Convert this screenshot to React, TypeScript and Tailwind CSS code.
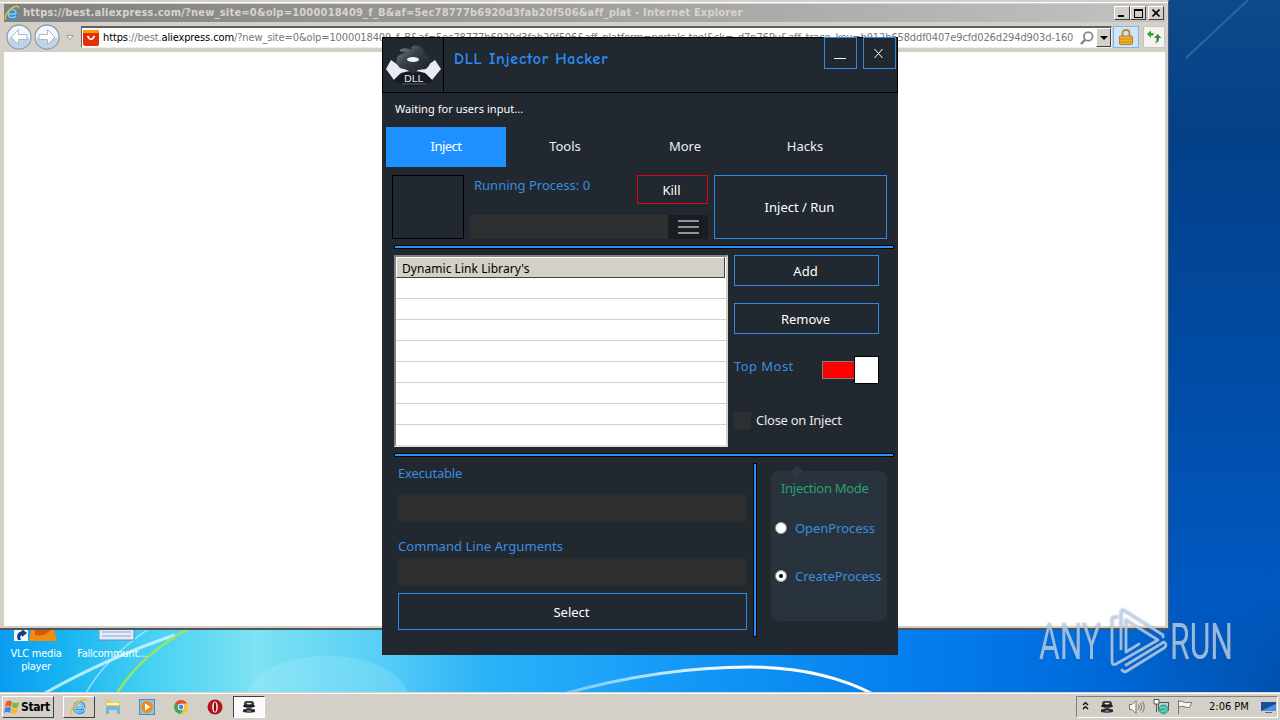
import React from 'react';

const tabs = ['Inject', 'Tools', 'More', 'Hacks'];

function IeLogo({ className }: { className: string }) {
  return (
    <svg viewBox="0 0 20 20" className={className} fill="none">
      <path d="M15.5 11.5H6M15.4 11.3C15.8 7.5 13.5 5 10.4 5C7.2 5 5 7.5 5 10.7C5 14 7.3 16.2 10.5 16.2C12.8 16.2 14.4 15.2 15.2 13.6" stroke="#2f92de" strokeWidth="3.6" />
      <path d="M15 11.3H6.5M15 11C15.3 7.8 13.3 5.4 10.4 5.4C7.4 5.4 5.3 7.7 5.3 10.7C5.3 13.8 7.4 15.8 10.5 15.8C12.6 15.8 14.2 14.9 15 13.5" stroke="#7fd0fa" strokeWidth="1.8" />
      <path d="M2.5 18C-0.5 15 4 8 9.5 4C14 0.8 18.5 0.5 18 4" stroke="#f0c020" strokeWidth="1.8" />
    </svg>
  );
}

function DllLogo() {
  return (
    <svg viewBox="0 0 60 54" className="h-[54px] w-[60px]">
      <defs>
        <linearGradient id="hat" x1="0" y1="0" x2="1" y2="1">
          <stop offset="0" stopColor="#84919c" />
          <stop offset="0.4" stopColor="#3a4149" />
          <stop offset="1" stopColor="#181c21" />
        </linearGradient>
      </defs>
      <path d="M8 22Q30 40 52 22L58 31L49 42L43 36Q30 40 17 36L11 42L3 31Z" fill="#e8ebf2" />
      <path d="M18 35Q30 31 42 35L50 43Q30 54 10 43Z" fill="#171c21" />
      <path d="M23 14Q14 14 18 11Q23 9 29 12Q26 8 33 7.5Q40 8 41 14L46 18Q50 25 43 31L35 32L30 36L24 32L17 30Q11 25 15 18Z" fill="url(#hat)" />
      <ellipse cx="30" cy="21.5" rx="6" ry="2.5" fill="#f0f2f5" />
      <path d="M19 46H43" stroke="#5a626b" />
      <text x="21" y="43.5" fontFamily="DejaVu Sans" fontSize="8" textLength="19" lengthAdjust="spacingAndGlyphs" fill="#dfe4ea">DLL</text>
    </svg>
  );
}

function AgentIcon() {
  return (
    <svg viewBox="0 0 14 14" className="h-3.5 w-3.5">
      <rect x="2" y="1" width="10" height="6" rx="2.5" fill="#3a3e42" />
      <ellipse cx="7" cy="6" rx="6" ry="1.8" fill="#1c1e20" />
      <ellipse cx="7" cy="3.6" rx="2.5" ry="0.9" fill="#e4e6e8" />
      <path d="M4 7H10L9 9.5H5Z" fill="#5a5e62" />
      <path d="M1 9.5Q7 8 13 9.5V12Q7 13.5 1 12Z" fill="#2a2c2e" />
      <path d="M5 11H9" stroke="#a8acb0" />
    </svg>
  );
}

function Orb({ flip }: { flip?: boolean }) {
  return (
    <svg viewBox="0 0 26 26" className={flip ? 'h-[26px] w-[26px] -scale-x-100' : 'h-[26px] w-[26px]'}>
      <circle cx="13" cy="13" r="12" fill="#f2f7fb" stroke="#8b9cad" strokeWidth="1.3" />
      <path d="M2.5 14A10.5 10.5 0 0 0 23.5 14Q13 10 2.5 14Z" fill="#bfd3e6" />
      <path d="M5 13L12.5 5.5V10.5H21V15.5H12.5V20.5Z" fill="#fff" stroke="#a9bac9" />
    </svg>
  );
}

function Separator() {
  return <div className="h-1 w-[500px] border border-[#02060d] bg-[#2b8ff5]" />;
}

function OutlineButton({ label, className }: { label: string; className: string }) {
  return (
    <button className={`flex items-center justify-center border border-[#3389e2] pt-0.5 pr-0.5 text-white ${className}`}>
      {label}
    </button>
  );
}

function Wallpaper() {
  return (
    <svg viewBox="0 0 1280 720" className="absolute inset-0 h-[720px] w-[1280px]">
      <defs>
        <linearGradient id="floor">
          <stop offset="0" stopColor="#0b9cf0" />
          <stop offset="0.05" stopColor="#18b4f2" />
          <stop offset="0.12" stopColor="#48d2f3" />
          <stop offset="0.2" stopColor="#7ee2f2" />
          <stop offset="0.29" stopColor="#5ad0f6" />
          <stop offset="0.38" stopColor="#2cb2f8" />
          <stop offset="0.52" stopColor="#159bf7" />
          <stop offset="0.7" stopColor="#0580ef" />
          <stop offset="0.85" stopColor="#006bdb" />
          <stop offset="1" stopColor="#0050ad" />
        </linearGradient>
        <linearGradient id="side" x1="0" y1="0" x2="0" y2="1">
          <stop offset="0" stopColor="#0c4a8a" />
          <stop offset="0.2" stopColor="#034088" />
          <stop offset="0.5" stopColor="#014aa2" />
          <stop offset="0.85" stopColor="#0058c0" />
          <stop offset="1" stopColor="#0058c0" stopOpacity="0" />
        </linearGradient>
        <linearGradient id="arc">
          <stop offset="0" stopColor="#6cc8ff" />
          <stop offset="0.6" stopColor="#fff" />
          <stop offset="1" stopColor="#fff" />
        </linearGradient>
      </defs>
      <rect width="1280" height="720" fill="url(#floor)" />
      <rect x="1168" width="112" height="690" fill="url(#side)" />
      <path d="M1186 58L1248 0" stroke="#5a93c9" strokeOpacity="0.4" strokeWidth="2" />
      <ellipse cx="327" cy="700" rx="82" ry="44" fill="#c0f4ff" fillOpacity="0.2" />
      <path d="M45 693C90 668 130 650 175 635" stroke="#d8f6ff" strokeOpacity="0.8" strokeWidth="3" fill="none" />
      <path d="M86 693C100 668 125 645 150 628" stroke="#c8f2ff" strokeOpacity="0.7" strokeWidth="1.5" fill="none" />
      <path d="M117 693C135 665 158 645 190 628" stroke="#9be65a" strokeWidth="2.5" fill="none" />
      <path d="M563 694Q660 667 750 667Q820 667 873 694" stroke="url(#arc)" strokeWidth="3" fill="none" />
    </svg>
  );
}

function BrowserWindow() {
  const control = 'flex h-[14px] w-4 items-center justify-center border border-t-white border-l-white border-r-[#404040] border-b-[#404040] bg-[#d4d0c8]';
  return (
    <div className="absolute top-0 left-0 flex h-[630px] w-[1169px] flex-col border-t border-r border-b-2 border-t-[#d4d0c8] border-r-[#505860] border-b-[#50555a] bg-[#d4d0c8] pt-px pr-[3px] pb-0.5 pl-1 font-['DejaVu_Sans_Condensed','DejaVu_Sans',sans-serif]">
      <div className="-ml-1 -mr-[3px] h-px shrink-0 bg-white" />
      <div className="mt-px flex h-[18px] shrink-0 items-center bg-linear-to-r from-[#808080] to-[#c2c2c2] pr-px">
        <IeLogo className="mr-[3px] h-4 w-4" />
        <span className="pt-px text-[11px] font-bold tracking-[0.21px] whitespace-nowrap text-[#d8d4cc]">
          https://best.aliexpress.com/?new_site=0&amp;olp=1000018409_f_B&amp;af=5ec78777b6920d3fab20f506&amp;aff_plat - Internet Explorer
        </span>
        <div className="ml-auto flex">
          <div className={control}><div className="mt-1.5 mr-0.5 h-0.5 w-1.5 bg-black" /></div>
          <div className={control}><div className="h-[9px] w-[9px] border border-t-2 border-black" /></div>
          <div className={`ml-0.5 ${control}`}>
            <svg viewBox="0 0 8 8" className="h-2 w-2"><path d="M0.5 0.5L7.5 7.5M7.5 0.5L0.5 7.5" stroke="#000" strokeWidth="1.6" /></svg>
          </div>
        </div>
      </div>
      <div className="flex h-[30px] shrink-0 items-center">
        <div className="ml-0.5 flex gap-0.5"><Orb /><Orb flip /></div>
        <svg viewBox="0 0 8 5" className="ml-1.5 h-[5px] w-2"><path d="M0.5 0.5H7.5L4 4.5Z" fill="#eee" stroke="#a5a19a" /></svg>
        <div className="ml-[7px] flex h-[22px] w-[1031px] shrink-0 items-center border border-t-2 border-t-[#606060] border-l-[#606060] border-r-[#eee] border-b-[#eee] bg-white">
          <svg viewBox="0 0 16 16" className="ml-px h-4 w-4 shrink-0">
            <rect width="16" height="16" rx="2" fill="#e62e04" />
            <path d="M0 3Q0 0 3 0H13Q16 0 16 3Z" fill="#ff9a00" />
            <path d="M4.5 6Q8 12.5 11.5 6" stroke="#fff" strokeWidth="1.6" fill="none" />
          </svg>
          <div className="mt-0.5 ml-1 w-[975px] shrink-0 text-[11px] tracking-[-0.12px] whitespace-nowrap text-[#777]">
            <span className="text-black">https</span>://best.<span className="text-black">aliexpress.com</span>/?new_site=0&amp;olp=1000018409_f_B&amp;af=5ec78777b6920d3fab20f506&amp;aff_platform=portals-tool&amp;sk=_d7n76Pu&amp;aff_trace_key=b912b658ddf0407e9cfd026d294d903d-160
          </div>
          <svg viewBox="0 0 14 14" className="ml-0.5 h-3.5 w-3.5 shrink-0" fill="none" stroke="#858585" strokeWidth="1.8"><circle cx="8.3" cy="5.4" r="4.3" /><path d="M5 8.8L1 13" strokeWidth="2.4" /></svg>
          <div className="ml-auto flex h-[19px] w-[15px] items-center justify-center border border-t-white border-l-white border-r-[#404040] border-b-[#404040] bg-[#d4d0c8]">
            <svg viewBox="0 0 8 4" className="h-1 w-2"><path d="M0 0H8L4 4Z" /></svg>
          </div>
        </div>
        <div className="ml-px flex h-[22px] w-[26px] items-center justify-center border border-[#86b4e6] bg-[#cfe3fb]">
          <svg viewBox="0 0 14 16" className="h-4 w-3.5">
            <path d="M3.5 8V4.5Q3.5 1 7 1Q10.5 1 10.5 4.5V8" fill="none" stroke="#b58a2a" strokeWidth="1.8" />
            <rect x="0.5" y="7" width="13" height="8.5" rx="1" fill="#f0b030" stroke="#c07a10" />
            <path d="M1 10H13M1 13H13" stroke="#c98a1c" />
          </svg>
        </div>
        <div className="ml-1 flex h-[22px] w-[22px] items-center justify-center rounded-xs border border-[#c8c5be] bg-[#f4f3f0]">
          <svg viewBox="0 0 16 14" className="h-3.5 w-4" fill="#35a035">
            <path d="M1 4L5 0.5V3H7.5V5.5H5V8Z" />
            <path d="M15.5 8L11.5 4L8 8H10.5Q11 11 9 13.5Q13.5 12 13 8Z" fill="#3c8a3c" />
          </svg>
        </div>
      </div>
      <div className="flex-1 bg-white" />
    </div>
  );
}

function InjectorHeader() {
  return (
    <div className="flex h-14 border border-black">
      <div className="w-[61px] border-r border-black"><DllLogo /></div>
      <h1 className="mt-[9px] ml-2.5 font-['Comic_Sans_MS','Comic_Neue','Noto_Sans',sans-serif] text-[16px] leading-6 font-bold tracking-[0.7px] whitespace-nowrap text-[#2b8cf5]">DLL Injector Hacker</h1>
      <div className="-mt-px mr-px ml-auto flex gap-1.5">
        <button className="flex h-8 w-[33px] items-center justify-center border border-[#3389e2]">
          <span className="mt-[11px] mr-px h-px w-3 bg-white" />
        </button>
        <button className="flex h-8 w-[33px] items-center justify-center border border-[#3389e2] pr-0.5">
          <svg viewBox="0 0 9 9" className="h-[9px] w-[9px]"><path d="M0.5 0L8.5 9M8.5 0L0.5 9" stroke="#fff" /></svg>
        </button>
      </div>
    </div>
  );
}

function ProcessRow() {
  return (
    <div className="mt-2 ml-2.5 flex h-16">
      <div className="w-[72px] border border-black" />
      <div className="ml-1.5 flex w-[238px] flex-col justify-between">
        <div className="flex justify-between pl-1">
          <span className="leading-5 text-[#3b8ddf]">Running Process: 0</span>
          <button className="h-[29px] w-[71px] border border-red-600 pt-0.5 pr-0.5 text-white">Kill</button>
        </div>
        <div className="flex h-6">
          <div className="w-[198px] bg-[#2d2f31]" />
          <div className="flex w-10 flex-col items-center justify-center gap-1 bg-[#191d21]">
            <div className="h-0.5 w-[21px] bg-[#929292]" />
            <div className="h-0.5 w-[21px] bg-[#929292]" />
            <div className="h-0.5 w-[21px] bg-[#929292]" />
          </div>
        </div>
      </div>
      <OutlineButton label="Inject / Run" className="ml-1.5 w-[173px]" />
    </div>
  );
}

function LibraryRow() {
  return (
    <div className="mt-1.5 ml-3 flex h-[192px]">
      <div className="w-[334px] border-2 border-t-[#808080] border-l-[#808080] border-r-[#d4d0c8] border-b-[#e4e0dc] bg-white">
        <div className="h-[21px] w-[329px] border border-t-white border-l-white border-r-[#404040] border-b-[#404040] bg-[#d4d0c8] pt-px pl-[5px] text-[12px] leading-5 tracking-[0.05px] text-black">Dynamic Link Library's</div>
        {Array.from({ length: 8 }, (_, i) => (
          <div key={i} className="h-[21px] border-b border-[#d0d0d0] last:h-5 last:border-b-0" />
        ))}
      </div>
      <div className="ml-1.5 flex w-[145px] flex-col">
        <OutlineButton label="Add" className="h-[31px]" />
        <OutlineButton label="Remove" className="mt-[17px] h-[31px]" />
        <div className="mt-[22px] flex h-7 items-center">
          <span className="-mt-1.5 tracking-[0.45px] text-[#3b8ddf]">Top Most</span>
          <div className="ml-auto h-[18px] w-8 border border-r-0 border-[#7f7f7f] bg-[#fe0000]" />
          <div className="h-7 w-[25px] border border-black bg-white" />
        </div>
        <div className="mt-[27px] flex h-[18px] items-center gap-[5px]">
          <div className="h-[17px] w-[17px] bg-[#2d2f31]" />
          <span className="pt-0.5 tracking-[-0.27px] text-[#e8e8e8]">Close on Inject</span>
        </div>
      </div>
    </div>
  );
}

function ModeOption({ label, checked }: { label: string; checked?: boolean }) {
  return (
    <label className="flex h-5 items-center gap-2 text-[#3b8ddf]">
      <span className="flex h-3 w-3 items-center justify-center rounded-full border border-[#9a9a9a] bg-white">
        {checked && <span className="h-1 w-1 rounded-full bg-black" />}
      </span>
      <span className="pt-0.5 tracking-[-0.05px]">{label}</span>
    </label>
  );
}

function LaunchRow() {
  return (
    <div className="mt-1.5 ml-4 flex h-[174px]">
      <div className="flex w-[349px] flex-col text-[#3b8ddf]">
        <span className="h-5 leading-5 tracking-[-0.2px]">Executable</span>
        <div className="mt-[11px] mr-px h-7 bg-[#2d2f31]" />
        <span className="mt-[14px] h-5 leading-5 tracking-[0.05px]">Command Line Arguments</span>
        <div className="mt-0.5 mr-px h-7 bg-[#2d2f31]" />
        <OutlineButton label="Select" className="mt-[7px] h-[37px]" />
      </div>
      <div className="ml-1.5 w-1 border border-[#02060d] bg-[#2b8ff5]" />
      <div className="relative mt-2 ml-3.5 h-[150px] w-[116px] rounded-lg bg-[#28333e] pl-1">
        <div className="absolute -top-1 left-[22px] h-2 w-2 rotate-45 bg-[#303943]" />
        <div className="mt-[7px] ml-1.5 h-5 leading-5 tracking-[-0.3px] text-[#2ba36b]">Injection Mode</div>
        <div className="mt-5"><ModeOption label="OpenProcess" /></div>
        <div className="mt-7"><ModeOption label="CreateProcess" checked /></div>
      </div>
    </div>
  );
}

function InjectorWindow() {
  return (
    <div className="absolute top-[37px] left-[382px] flex h-[618px] w-[516px] flex-col bg-[#21282f] font-['Noto_Sans',sans-serif] text-[13px] whitespace-nowrap">
      <InjectorHeader />
      <div className="mt-[7px] ml-[13px] h-[18px] text-[11px] leading-[18px] tracking-[0.05px] text-white">Waiting for users input...</div>
      <div className="mt-[9px] ml-1 flex h-10">
        {tabs.map((tab) => (
          <div key={tab} className={tab === 'Inject' ? 'flex w-[120px] items-center justify-center bg-[#1e90ff] tracking-[-0.5px] text-white' : 'flex w-[120px] items-center justify-center pr-0.5 text-[#eef0f2]'}>
            {tab}
          </div>
        ))}
      </div>
      <ProcessRow />
      <div className="mt-1.5 ml-3"><Separator /></div>
      <LibraryRow />
      <div className="mt-1.5 ml-3"><Separator /></div>
      <LaunchRow />
    </div>
  );
}

function DesktopIcons() {
  return (
    <div className="absolute top-[629px] left-1 flex font-['DejaVu_Sans_Condensed','DejaVu_Sans',sans-serif] text-[11px] leading-[13px] tracking-[-0.25px] text-white">
      <div className="flex w-16 flex-col items-center text-center">
        <svg viewBox="0 0 46 12" className="mb-1.5 h-3 w-[46px]">
          <path d="M18 0H41L44 12H16Z" fill="#f28a10" />
          <path d="M22 0H38Q33 8 22 6Z" fill="#cf5a08" />
          <rect width="14" height="12" x="1" fill="#f4f6fa" />
          <path d="M5 11Q2 4 9 2V0L14 4L9 8V6Q6 7 8 11Z" fill="#123c82" />
        </svg>
        <span>VLC media<br />player</span>
      </div>
      <div className="ml-1 flex w-20 flex-col items-center">
        <svg viewBox="0 0 36 12" className="mb-1.5 ml-2.5 h-3 w-9">
          <rect width="35" height="11" fill="#e4ebf8" stroke="#6b86b8" />
          <path d="M3 3H32M3 7H32" stroke="#8fa5d0" />
        </svg>
        <span className="whitespace-nowrap">Fallcommunt...</span>
      </div>
    </div>
  );
}

function Watermark() {
  return (
    <div className="absolute top-[605px] left-[1030px] drop-shadow-[0_0_1px_rgba(60,80,110,0.45)]">
      <svg viewBox="-6 0 250 74" className="h-[74px] w-[250px]" fill="none">
        <g fill="#b9d2ee" fillOpacity="0.8" fontFamily="Roboto" fontSize="50">
          <text x="3" y="54" textLength="62" lengthAdjust="spacingAndGlyphs">ANY</text>
          <text x="134" y="54" textLength="63" lengthAdjust="spacingAndGlyphs">RUN</text>
        </g>
        <g stroke="#c0d5ee" strokeOpacity="0.8" strokeWidth="2.8" strokeLinejoin="round" strokeLinecap="round">
          <path d="M81 12H79Q76 12 76 15V56Q76 61 80 59L122 35L90 15V47L103 39" />
          <path d="M85 44V8Q85 3 89 6L127 30V32" />
          <path d="M86 65Q88 68 91 66L128 43Q132 40 128 37L90 60" />
        </g>
      </svg>
    </div>
  );
}

function Taskbar() {
  return (
    <div className="absolute top-[692px] left-0 flex h-7 w-[1280px] items-start border-t border-[#d4d0c8] bg-[#d4d0c8] pr-0.5 pl-0.5 font-['DejaVu_Sans_Condensed','DejaVu_Sans',sans-serif] text-[11px] text-black shadow-[inset_0_1px_0_#fff,0_1px_0_#d4d0c8]">
      <button className="mt-[3px] flex h-[22px] w-[52px] items-center border border-t-white border-l-white border-r-[#404040] border-b-[#404040] pl-px text-[12px] font-bold tracking-[-0.4px]">
        <svg viewBox="0 0 16 16" className="mr-px h-4 w-4 shrink-0">
          <path d="M2 3Q5 0 8 3L7 8Q4 6 1 8Z" fill="#ee5a28" />
          <path d="M9 3Q12 5 15 3L14 8Q11 10 8 8Z" fill="#7db93a" />
          <path d="M1 9Q4 7 7 9L6 14Q3 12 0 14Z" fill="#3e86d6" />
          <path d="M8 9Q11 11 14 9L13 14Q10 16 7 14Z" fill="#f5bd25" />
        </svg>
        Start
      </button>
      <div className="mt-[3px] ml-[9px] flex h-[22px] w-8 items-center justify-center border border-t-white border-l-white border-r-[#404040] border-b-[#404040]">
        <IeLogo className="h-[18px] w-[18px]" />
      </div>
      <div className="mt-1.5 ml-[10px] flex gap-[18px]">
        <svg viewBox="0 0 16 16" className="h-4 w-4">
          <path d="M1 1H6L7 3H15V10H1Z" fill="#e8c95e" />
          <path d="M1 7H15V15H12V11H4V15H1Z" fill="#75b8df" />
          <path d="M2 5H14" stroke="#fff3b8" strokeWidth="2" />
        </svg>
        <svg viewBox="0 0 16 16" className="h-4 w-4">
          <rect x="0.5" y="0.5" width="15" height="15" fill="#8bc4e8" stroke="#4b8db8" />
          <circle cx="8" cy="8" r="6" fill="#f58a12" />
          <path d="M6 4.5L11.5 8L6 11.5Z" fill="#fff" />
        </svg>
        <svg viewBox="0 0 16 16" className="h-4 w-4">
          <circle cx="8" cy="8" r="7" fill="#f5c22d" />
          <path d="M8 8L2 4.5A7 7 0 0 1 14 4.5H8Z" fill="#dc4b3e" />
          <path d="M8 8L2 4.5A7 7 0 0 0 7.5 15L10.5 10Z" fill="#3aa757" />
          <circle cx="8" cy="8" r="3.2" fill="#fff" />
          <circle cx="8" cy="8" r="2.4" fill="#4285f4" />
        </svg>
        <svg viewBox="0 0 16 16" className="h-4 w-4">
          <circle cx="8" cy="8" r="7.5" fill="#b5121b" />
          <ellipse cx="8" cy="8" rx="2.8" ry="5.5" fill="#fff" />
          <ellipse cx="8" cy="8" rx="1.3" ry="4.8" fill="#8a0c12" />
        </svg>
      </div>
      <div className="mt-[3px] ml-2.5 flex h-[22px] w-8 items-center justify-center border border-t-[#404040] border-l-[#404040] border-r-white border-b-white bg-[#fbfaf9]">
        <AgentIcon />
      </div>
      <div className="mt-[3px] ml-auto flex h-[22px] w-[202px] items-center border border-t-[#808080] border-l-[#808080] border-r-white border-b-white pl-[5px]">
        <svg viewBox="0 0 7 9" className="mb-1 h-[9px] w-[7px] shrink-0" fill="none" stroke="#000" strokeWidth="1.2"><path d="M1 4L3.5 1.5L6 4M1 8L3.5 5.5L6 8" /></svg>
        <div className="ml-[11px]"><AgentIcon /></div>
        <svg viewBox="0 0 16 14" className="ml-[15px] h-3.5 w-4 shrink-0" fill="none" stroke="#777">
          <path d="M0.5 4.5H3L7 0.5V13.5L3 9.5H0.5Z" fill="#f6f6f6" />
          <path d="M9.5 4.5Q11 7 9.5 9.5M11.5 3Q14 7 11.5 11M13.5 1.5Q17 7 13.5 12.5" />
        </svg>
        <svg viewBox="0 0 16 16" className="ml-2 h-4 w-4 shrink-0">
          <rect x="5.5" y="3.5" width="10" height="8" fill="#c5ced2" stroke="#555" />
          <circle cx="10.5" cy="10.5" r="5" fill="#37b38c" />
          <path d="M7 9Q10 7 14 10M8 13Q11 11 14 12" stroke="#a3d8f5" fill="none" />
          <path d="M1 0.5H6V5H1ZM3.5 5V13" stroke="#555" fill="#fff" />
        </svg>
        <svg viewBox="0 0 16 16" className="ml-2 h-4 w-4 shrink-0"><path d="M1.5 15V1M1.5 2.5Q4 1 7.5 3.5H15L12.5 8.5Q9 9 7 7.5Q4 6.5 1.5 8.5" fill="#f7f7f5" stroke="#777" /></svg>
        <span className="ml-4 w-[52px] shrink-0 pt-px whitespace-nowrap">2:06 PM</span>
        <svg viewBox="0 0 15 13" className="h-[13px] w-[15px] shrink-0"><path d="M0 1H15V10H0Z" fill="#194e9f" /><path d="M0 10L15 3V10Z" fill="#4c91df" /><path d="M4 11.5H11" stroke="#666" /></svg>
      </div>
    </div>
  );
}

export default function App() {
  return (
    <div className="relative h-[720px] w-[1280px] overflow-hidden">
      <Wallpaper />
      <DesktopIcons />
      <BrowserWindow />
      <InjectorWindow />
      <Watermark />
      <Taskbar />
    </div>
  );
}
